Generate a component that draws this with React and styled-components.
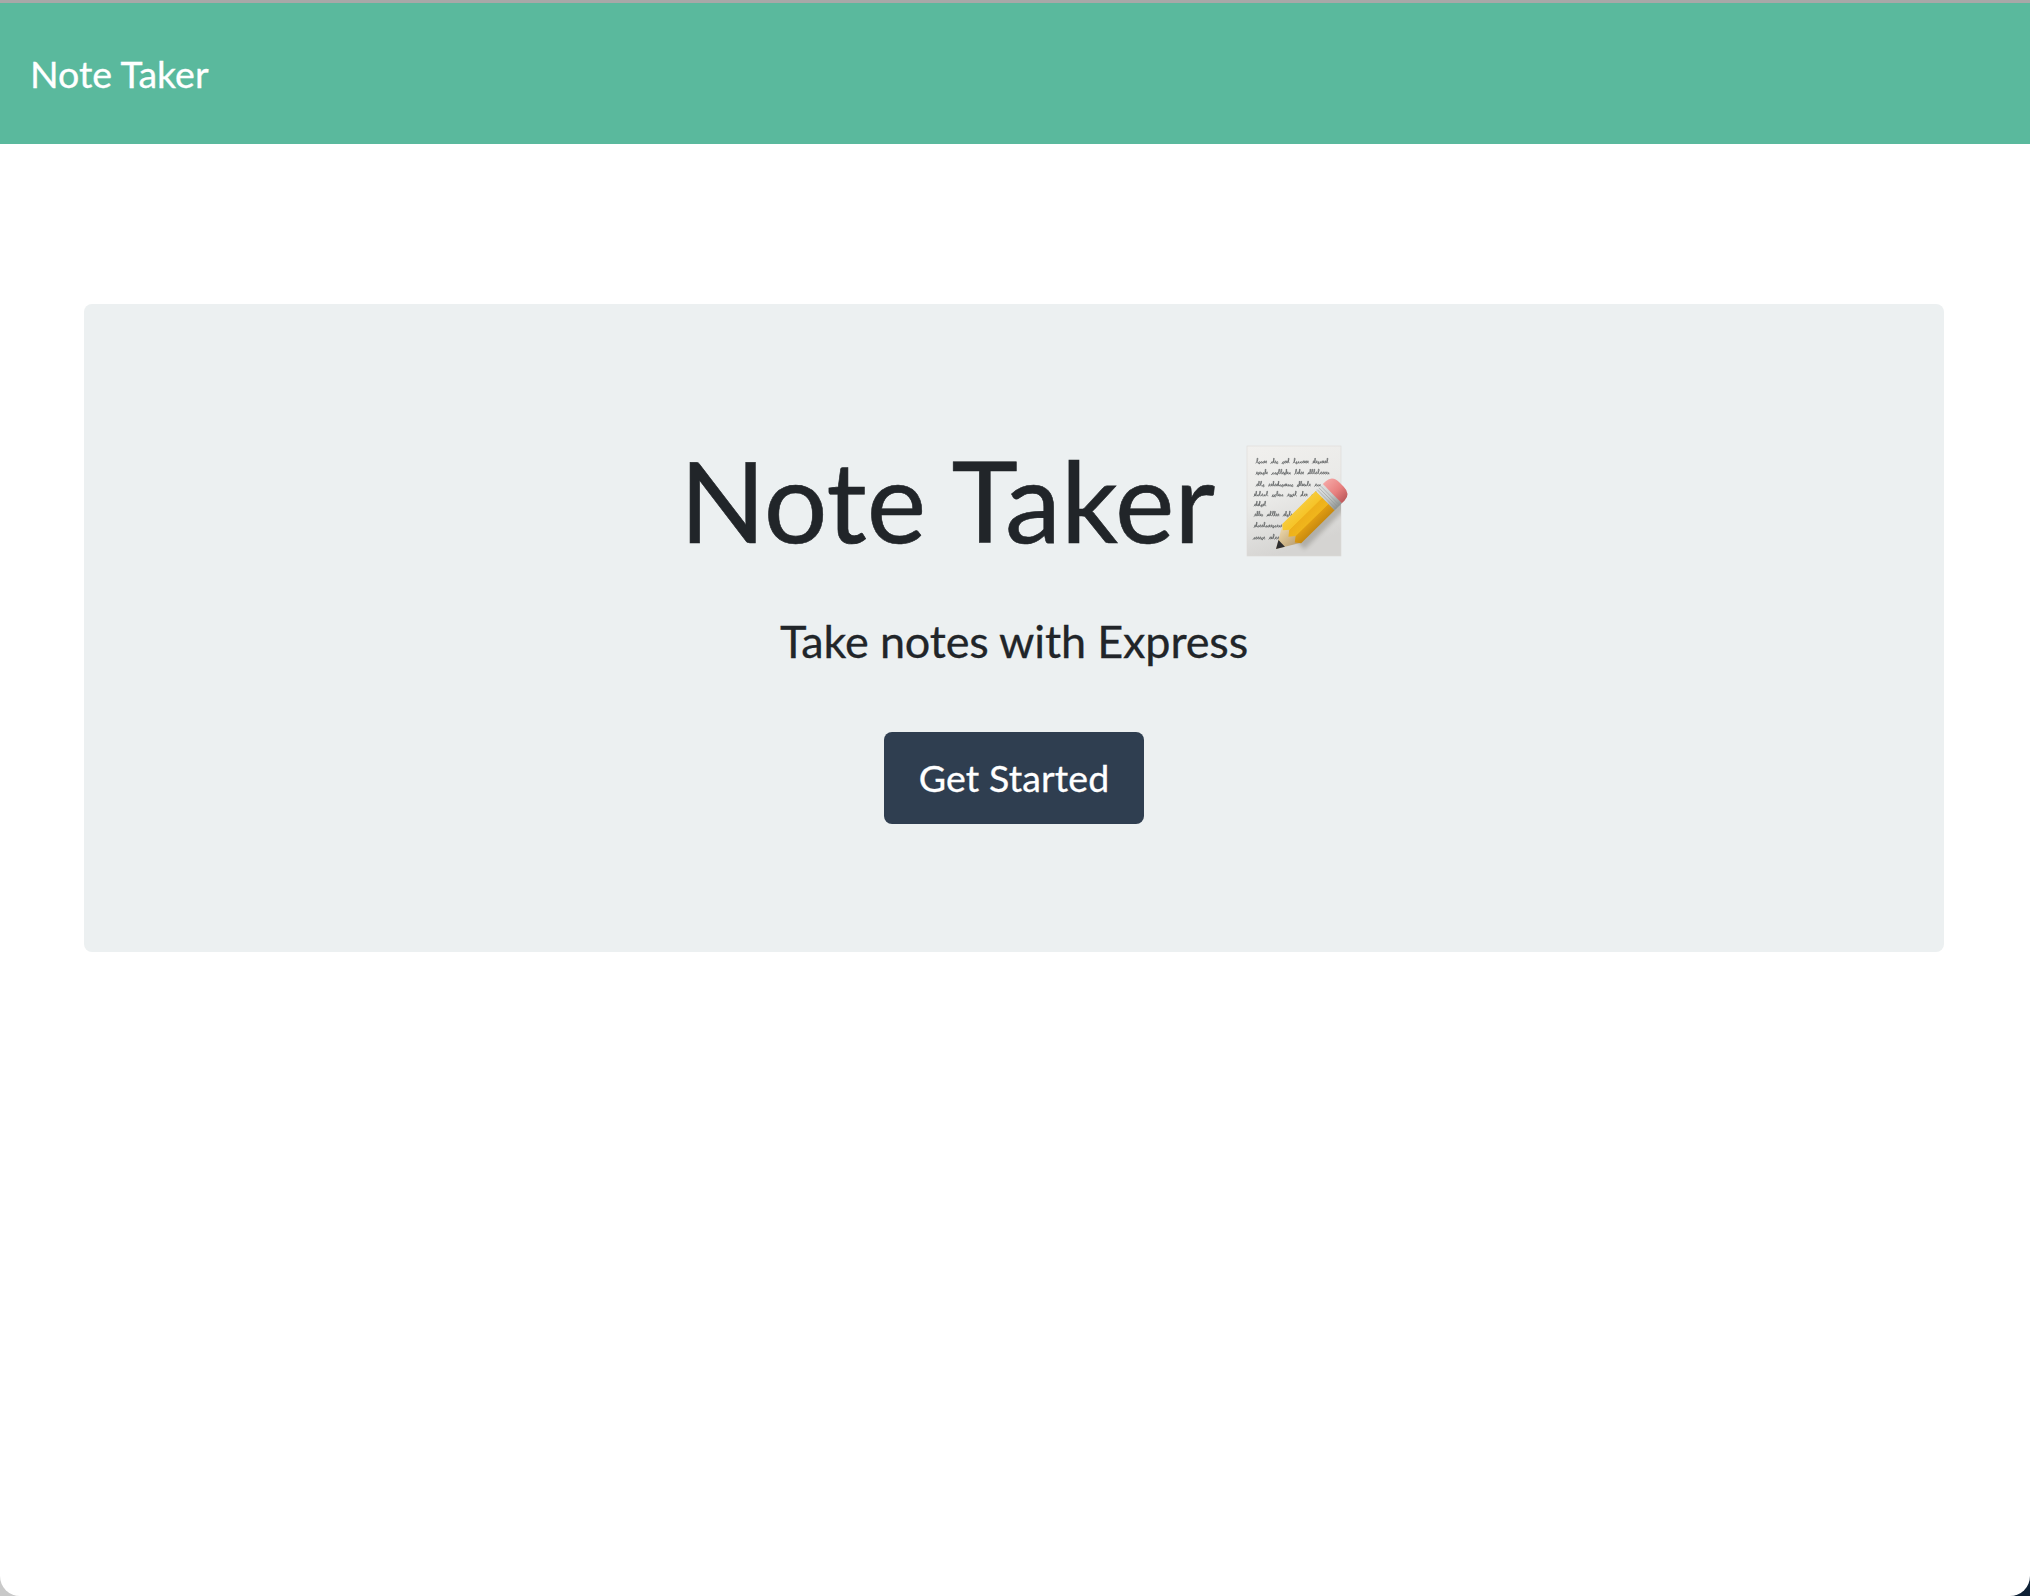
import React from "react";
import styled, { createGlobalStyle } from "styled-components";

const Global = createGlobalStyle`
  html, body { margin: 0; padding: 0; background: #fff; }
  body { font-family: Lato, "Noto Sans", sans-serif; }
`;

const Backdrop = styled.div`
  width: 2030px;
  height: 1596px;
  background: linear-gradient(to right, #c9c9c9 50%, #0e2136 50%);
`;

const Shell = styled.div`
  height: 100%;
  box-sizing: border-box;
  background: #fff;
  border-radius: 0 0 20px 20px;
  overflow: hidden;
  display: flex;
  flex-direction: column;
`;

const Navbar = styled.nav`
  height: 144px;
  box-sizing: border-box;
  border-top: 3px solid #a8a8a8;
  background: #5ab99d;
  display: flex;
  align-items: center;
  padding: 0 30px;
`;

const Brand = styled.a`
  color: #fff;
  font-size: 37.5px;
  line-height: 1;
  -webkit-text-stroke: 0.3px #fff;
`;

const Jumbotron = styled.section`
  margin: 160px 86px 0 84px;
  height: 648px;
  box-sizing: border-box;
  background: #ecf0f1;
  border-radius: 8px;
  display: flex;
  flex-direction: column;
  align-items: center;
  padding-top: 138px;
`;

const Heading = styled.h1`
  margin: 0;
  display: flex;
  align-items: center;
  gap: 32px;
  height: 120px;
  color: #212529;
  font-size: 112.5px;
  font-weight: 400;
  line-height: 120px;
  -webkit-text-stroke: 0.6px #212529;
`;

const HeadingText = styled.span`
  padding-bottom: 5px;
`;

const Lead = styled.p`
  margin: 48px 0 0;
  color: #212529;
  font-size: 45px;
  line-height: 62px;
  letter-spacing: -0.15px;
  -webkit-text-stroke: 0.3px #212529;
`;

const Button = styled.a`
  margin-top: 60px;
  width: 260px;
  height: 92px;
  box-sizing: border-box;
  padding-bottom: 2px;
  display: flex;
  align-items: center;
  justify-content: center;
  background: #2f3e50;
  color: #fff;
  border-radius: 8px;
  font-size: 37.5px;
  letter-spacing: 0.12px;
  -webkit-text-stroke: 0.3px #fff;
`;

const EmojiSvg = styled.svg`
  flex: none;
  width: 101px;
  height: 112px;
  overflow: visible;
`;

const scribbleRows = [
  [35, 32, [10, 6, 7, 15, 14]],
  [35, 43, [11, 17, 8, 20]],
  [35, 55, [8, 23, 13, 6]],
  [33, 65, [12, 10, 8, 6, 5]],
  [33, 75, [11]],
  [33, 85, [8, 11, 10]],
  [33, 96, [28, 16, 8]],
  [32, 108, [10, 8, 6]],
];

function rng(seed) {
  let s = seed;
  return () => {
    s = (s * 9301 + 49297) % 233280;
    return s / 233280;
  };
}

function scribble(x0, y, words, seed) {
  const r = rng(seed * 37 + 11);
  let d = "";
  let x = x0;
  words.forEach((w) => {
    const end = x + w;
    d += `M${x.toFixed(1)} ${y + r() * 0.6}`;
    while (x < end) {
      const k = r();
      const h = k > 0.78 ? 5 : k > 0.35 ? 2.2 : 1.4;
      const low = k < 0.1 ? 3 : 0.4;
      const step = 1.2 + r() * 1.3;
      d += ` C${(x + step * 0.9).toFixed(1)} ${(y - h * 0.5).toFixed(1)} ${(x + step * 1.1).toFixed(1)} ${(y - h).toFixed(1)} ${(x + step * 0.6).toFixed(1)} ${(y - h).toFixed(1)}`;
      d += ` C${(x + step * 0.3).toFixed(1)} ${(y - h * 0.5).toFixed(1)} ${(x + step * 0.5).toFixed(1)} ${(y + low).toFixed(1)} ${(x + step).toFixed(1)} ${y}`;
      x += step;
    }
    x += 4;
  });
  return d;
}

function MemoEmoji() {
  return (
    <EmojiSvg viewBox="26 15 101 112" aria-hidden="true">
      <defs>
        <linearGradient id="paper" x1="0" y1="0" x2="0.3" y2="1">
          <stop offset="0" stopColor="#f1f0ee" />
          <stop offset="0.5" stopColor="#eaeae8" />
          <stop offset="1" stopColor="#d5d4d2" />
        </linearGradient>
        <linearGradient id="body" x1="0" y1="0" x2="0" y2="1">
          <stop offset="0" stopColor="#f7cb3a" />
          <stop offset="0.34" stopColor="#f6c428" />
          <stop offset="0.36" stopColor="#eeb01a" />
          <stop offset="0.66" stopColor="#f0b61c" />
          <stop offset="0.68" stopColor="#df9c12" />
          <stop offset="1" stopColor="#c88a0f" />
        </linearGradient>
        <linearGradient id="ferrule" x1="0" y1="0" x2="0" y2="1">
          <stop offset="0" stopColor="#dfe2e1" />
          <stop offset="0.5" stopColor="#c9cdcc" />
          <stop offset="1" stopColor="#8e9290" />
        </linearGradient>
        <linearGradient id="eraser" x1="0" y1="0" x2="0" y2="1">
          <stop offset="0" stopColor="#f4a5a3" />
          <stop offset="0.55" stopColor="#e8807f" />
          <stop offset="1" stopColor="#bd5a5c" />
        </linearGradient>
        <linearGradient id="wood" x1="0" y1="0" x2="0" y2="1">
          <stop offset="0" stopColor="#f1dcae" />
          <stop offset="1" stopColor="#b59a6e" />
        </linearGradient>
        <filter id="soft" x="-20%" y="-20%" width="140%" height="140%">
          <feGaussianBlur stdDeviation="2" />
        </filter>
        <clipPath id="sheet">
          <rect x="26" y="15" width="94" height="110" />
        </clipPath>
      </defs>
      <rect x="26" y="15" width="94" height="110" fill="url(#paper)" stroke="#dcdbd8" strokeWidth="0.6" />
      {scribbleRows.map(([a, y, words], n) => (
        <path key={y} d={scribble(a, y, words, n + 1)} fill="none" stroke="#47494b" strokeWidth="0.6" strokeLinecap="round" />
      ))}
      <g clipPath="url(#sheet)">
        <g transform="translate(55 118) rotate(-44.5)">
          <rect x="20" y="-6" width="64" height="26" fill="#55524a" opacity="0.3" filter="url(#soft)" />
        </g>
      </g>
      <g transform="translate(55 118) rotate(-44.5)">
        <path d="M0 0 L23 -13.5 L23 13.5 Z" fill="url(#wood)" />
        <path d="M0 0 L8 -4.6 L8 4.6 Z" fill="#2e2e30" />
        <path d="M22 -13.5 L69 -13.5 L69 13.5 L22 13.5 L18 8.5 L23 4.5 L17.5 0 L23 -4.5 L18 -8.5 Z" fill="url(#body)" />
        <rect x="69" y="-13.5" width="10" height="27" fill="url(#ferrule)" />
        <path d="M71 -13.5 V13.5 M73.5 -13.5 V13.5 M76 -13.5 V13.5" stroke="#8f9391" strokeWidth="0.5" />
        <path d="M79 -13.5 H83 Q92 -13 92 -3 V3 Q92 13 83 13.5 H79 Z" fill="url(#eraser)" />
      </g>
    </EmojiSvg>
  );
}

export default function App() {
  return (
    <>
      <Global />
      <Backdrop>
        <Shell>
          <Navbar>
            <Brand>Note Taker</Brand>
          </Navbar>
          <Jumbotron>
            <Heading>
              <HeadingText>Note Taker</HeadingText>
              <MemoEmoji />
            </Heading>
            <Lead>Take notes with Express</Lead>
            <Button>Get Started</Button>
          </Jumbotron>
        </Shell>
      </Backdrop>
    </>
  );
}
